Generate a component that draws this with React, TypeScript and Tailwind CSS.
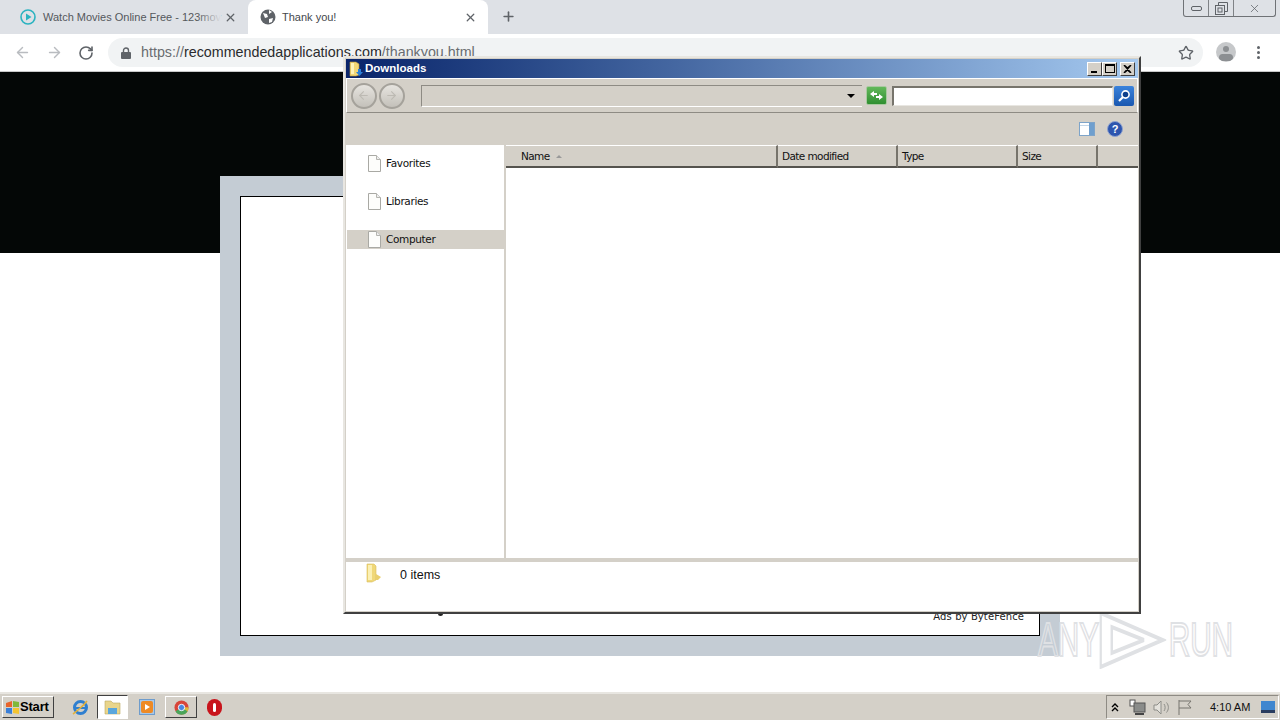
import React from 'react';
import { ArrowLeft, ArrowRight, RotateCw, Star, X, Plus } from 'lucide-react';

const SANS = '[font-family:"Liberation_Sans",Arial,sans-serif]';
const TAHOMA = '[font-family:"DejaVu_Sans",Verdana,sans-serif]';

const PageIcon = () => (
  <svg width="13" height="17" viewBox="0 0 13 17" className="shrink-0">
    <path d="M.5.5h8l4 4v12H.5z" fill="#fdfdfb" stroke="#a9a9a4" />
    <path d="M8.500.5v4h4" fill="#eee" stroke="#b5b5b0" />
  </svg>
);

const NavItem = ({ label, selected, mt }: { label: string; selected?: boolean; mt: string }) => (
  <div className={`${mt} h-[19px] flex items-center pl-[21px] gap-[5px] ${selected ? 'bg-[#d4d0c8]' : ''}`}>
    <PageIcon />
    <span className="text-[10.5px] text-[#111] tracking-[-0.35px]">{label}</span>
  </div>
);

const ColumnHead = ({ label, width, sort }: { label: string; width: string; sort?: boolean }) => (
  <div className={`${width} h-[23px] pt-[2px] bg-[#d4d0c8] border-t border-t-white border-r-2 border-r-[#77746c] border-b-2 border-b-[#55534e] flex items-center text-[10.5px] text-[#111] tracking-[-0.6px] ${sort ? 'pl-[15px]' : 'pl-[4px]'}`}>
    {label}
    {sort && <span className="ml-[6px] mb-[2px] w-0 h-0 border-x-[3px] border-x-transparent border-b-[3px] border-b-[#999]" />}
  </div>
);

const RoundNav = ({ dir }: { dir: 'l' | 'r' }) => (
  <div className="w-[26px] h-[26px] rounded-full border-2 border-[#a5a29b] bg-gradient-to-b from-[#e6e4df] to-[#c4c1ba] flex items-center justify-center">
    {dir === 'l' ? <ArrowLeft size={13} color="#bdbab3" /> : <ArrowRight size={13} color="#bdbab3" />}
  </div>
);

const CaptionBtn = ({ children }: { children: React.ReactNode }) => (
  <div className="w-[15px] h-[14px] bg-[#d4d0c8] border border-t-white border-l-white border-r-[#404040] border-b-[#404040] flex items-center justify-center">
    {children}
  </div>
);

const DownloadsWindow = () => (
  <div className={`absolute left-[343px] top-[56px] w-[798px] h-[558px] bg-[#d4d0c8] border-t-2 border-t-[#e8e6e1] border-l-2 border-l-[#e8e6e1] border-r-2 border-r-[#404040] border-b-2 border-b-[#404040] flex flex-col p-[1px] ${TAHOMA}`}>
    <div className="h-[19px] bg-gradient-to-r from-[#0a246a] to-[#a6caf0] flex items-center pl-[3px] pr-[3px] shrink-0">
      <svg width="14" height="16" viewBox="0 0 14 16" className="shrink-0">
        <path d="M1 1h6l3 2v11l-3 1H1z" fill="#f2d775" stroke="#b8963a" strokeWidth=".6" />
        <path d="M2 2h3v11H2z" fill="#fdf3b8" />
        <path d="M9 8h3v3h2l-3.500 4L7 11h2z" fill="#2a7fd8" />
      </svg>
      <span className="ml-[2px] text-[11.5px] font-bold text-white [font-family:'Liberation_Sans',Arial,sans-serif]">Downloads</span>
      <div className="ml-auto flex">
        <CaptionBtn><span className="w-[6px] h-[2px] bg-black mt-[6px] -ml-[2px]" /></CaptionBtn>
        <CaptionBtn><span className="w-[10px] h-[9px] border border-black border-t-2" /></CaptionBtn>
        <div className="ml-[3px]">
          <CaptionBtn>
            <svg width="9" height="8" viewBox="0 0 9 8"><path d="M1 0l3.500 3L8 0M1 8l3.500-3L8 8M1 0l7 8M8 0L1 8" stroke="#000" strokeWidth="1.4" fill="none" /></svg>
          </CaptionBtn>
        </div>
      </div>
    </div>

    <div className="h-[35px] shrink-0 border border-t-white border-l-white border-r-white border-b-[#8e8b84] flex items-center pl-[4px] pr-[3px] bg-[#d4d0c8]">
      <RoundNav dir="l" />
      <div className="ml-[2px]"><RoundNav dir="r" /></div>
      <div className="ml-[16px] w-[442px] h-[22px] bg-[#d4d0c8] border-l border-t border-[#8e8b84] border-b-white border-b flex items-center justify-end pr-[7px]">
        <span className="w-0 h-0 border-x-[4px] border-x-transparent border-t-[4px] border-t-black" />
      </div>
      <div className="ml-[4px] w-[21px] h-[19px] rounded-[2px] bg-gradient-to-b from-[#62b85a] to-[#2f8f31] border border-[#a9c9a0] flex items-center justify-center">
        <svg width="15" height="11" viewBox="0 0 15 11"><path d="M5 1L1 4l4 3V5h3V3H5zM10 10l4-3-4-3v2H7v2h3z" fill="#fff" /></svg>
      </div>
      <div className="ml-[5px] w-[222px] h-[20px] bg-white border-l-2 border-t-2 border-[#77746c] border-r border-b border-r-[#e8e6e1] border-b-[#e8e6e1]" />
      <div className="ml-[1px] w-[20px] h-[20px] rounded-[2px] bg-gradient-to-b from-[#3b83dc] to-[#1a58b0] flex items-center justify-center">
        <svg width="14" height="14" viewBox="0 0 14 14"><circle cx="8.500" cy="5.500" r="3.600" fill="#0c3f8c" stroke="#fff" strokeWidth="1.600" /><path d="M6 8l-4 4" stroke="#fff" strokeWidth="2.200" /></svg>
      </div>
    </div>

    <div className="h-[32px] shrink-0 flex items-center justify-end pr-[15px] gap-[12px]">
      <svg width="16" height="14" viewBox="0 0 16 14">
        <rect x=".5" y=".5" width="15" height="13" fill="#fff" stroke="#7ea4c9" />
        <rect x="10" y="1" width="5" height="12" fill="#6f9fce" />
        <path d="M1 3.500h9" stroke="#c3d6e8" />
      </svg>
      <svg width="16" height="16" viewBox="0 0 16 16">
        <circle cx="8" cy="8" r="7.500" fill="#2d55ae" stroke="#8ea2cf" />
        <text x="8" y="12" textAnchor="middle" fontSize="11" fontWeight="700" fill="#fff" fontFamily="Liberation Sans">?</text>
      </svg>
    </div>

    <div className="flex-1 flex min-h-0">
      <div className="w-[158px] shrink-0 bg-white pl-[1px] pt-[9px]">
        <NavItem label="Favorites" mt="" />
        <NavItem label="Libraries" mt="mt-[19px]" />
        <NavItem label="Computer" selected mt="mt-[19px]" />
      </div>
      <div className="ml-[2px] flex-1 bg-white flex flex-col min-w-0">
        <div className="flex shrink-0">
          <ColumnHead label="Name" width="w-[272px]" sort />
          <ColumnHead label="Date modified" width="w-[120px]" />
          <ColumnHead label="Type" width="w-[120px]" />
          <ColumnHead label="Size" width="w-[80px]" />
          <div className="flex-1 h-[23px] bg-[#d4d0c8] border-t border-t-white border-b-2 border-b-[#55534e]" />
        </div>
      </div>
    </div>

    <div className="h-[4px] shrink-0" />
    <div className="h-[49px] shrink-0 bg-white flex items-start pl-[19px] pt-[1px]">
      <svg width="18" height="20" viewBox="0 0 18 20" className="shrink-0">
        <path d="M2 1h7l2 2v14l-4 2H2z" fill="#f0d878" stroke="#d9bd5c" strokeWidth=".6" />
        <path d="M3 2h4v15H3z" fill="#fbf0b4" />
        <path d="M11 11l5 3-3 3h-2z" fill="#e9cf6d" />
      </svg>
      <span className={`ml-[17px] mt-[3px] text-[12.5px] text-[#111] ${SANS}`}>0 items</span>
    </div>
  </div>
);

const App = () => (
  <div className={`relative w-[1280px] h-[720px] overflow-hidden bg-white flex flex-col ${SANS}`}>
    <div className="h-[34px] bg-[#dee1e6] flex items-end shrink-0 relative">
      <div className="w-[248px] h-[34px] flex items-center pl-[20px] pr-[11px] shrink-0">
        <svg width="16" height="16" viewBox="0 0 16 16" className="shrink-0">
          <circle cx="8" cy="8" r="7" fill="none" stroke="#2bb3c0" strokeWidth="1.6" />
          <path d="M6 4.500l5.500 3.500L6 11.500z" fill="#2bb3c0" />
        </svg>
        <span className="relative ml-[7px] text-[11px] text-[#55585c] whitespace-nowrap">
          Watch Movies Online Free - 123mov
          <span className="absolute right-0 top-0 bottom-0 w-[24px] bg-gradient-to-r from-transparent to-[#dee1e6]" />
        </span>
        <X size={13} strokeWidth={2.4} color="#5f6368" className="ml-auto" />
      </div>
      <div className="w-[240px] h-[34px] bg-white rounded-t-[8px] flex items-center pl-[12px] pr-[11px] shrink-0">
        <svg width="16" height="16" viewBox="0 0 16 16" className="shrink-0">
          <circle cx="8" cy="8" r="7.500" fill="#5f6368" />
          <path d="M3 4l4 1 1 3-3 1zM9 10l4-1-1 4-3 1zM9 1l3 2-3 2z" fill="#fff" />
        </svg>
        <span className="ml-[6px] text-[11px] text-[#45484c]">Thank you!</span>
        <X size={13} strokeWidth={2.4} color="#5f6368" className="ml-auto" />
      </div>
      <Plus size={15} strokeWidth={2.6} color="#5f6368" className="ml-[13px] mb-[10px]" />
      <div className="ml-auto mr-[4px] mb-[17px] w-[93px] h-[17px] border border-[#6f7276] border-t-0 rounded-b-[3px] flex items-center">
        <div className="w-[25px] h-full border-r border-[#7f8286] flex items-center justify-center">
          <span className="w-[11px] h-[5px] rounded-[2px] border border-[#5f6368]" />
        </div>
        <div className="w-[25px] h-full border-r border-[#7f8286] flex items-center justify-center">
          <svg width="13" height="13" viewBox="0 0 13 13" fill="none" stroke="#5f6368"><rect x=".5" y="3.500" width="9" height="9" /><path d="M3.500 3.500v-3h9v9h-3" /><rect x="3" y="6" width="4" height="4" /></svg>
        </div>
        <div className="flex-1 flex items-center justify-center">
          <X size={13} strokeWidth={1.4} color="#5f6368" />
        </div>
      </div>
    </div>

    <div className="h-[38px] shrink-0 bg-white border-b border-[#c8c8c8] flex items-center pl-[14px]">
      <ArrowLeft size={17} strokeWidth={2} color="#b9bcc0" />
      <ArrowRight size={17} strokeWidth={2} color="#b9bcc0" className="ml-[15px]" />
      <RotateCw size={16} strokeWidth={2.4} color="#5f6368" className="ml-[15px]" />
      <div className="ml-[14px] w-[1095px] h-[29px] bg-[#f1f3f4] rounded-full flex items-center pl-[13px] pr-[8px]">
        <svg width="10" height="12" viewBox="0 0 10 12" className="shrink-0">
          <rect y="5" width="10" height="7" rx="1" fill="#5f6368" />
          <path d="M2.500 5V3.500a2.500 2.500 0 0 1 5 0V5" fill="none" stroke="#5f6368" strokeWidth="1.4" />
        </svg>
        <span className="ml-[10px] text-[14.3px] text-[#6a6d70] whitespace-nowrap">
          https://<span className="text-[#2a2b2d]">recommendedapplications.com</span>/thankyou.html
        </span>
        <Star size={16} strokeWidth={2} color="#5f6368" className="ml-auto mr-[1px]" />
      </div>
      <div className="ml-[13px] mb-[1px] w-[20px] h-[20px] rounded-full bg-[#c6c8ca] relative overflow-hidden shrink-0">
        <span className="absolute left-[7px] top-[4px] w-[6px] h-[6px] rounded-full bg-[#8c8f92]" />
        <span className="absolute left-[3px] top-[12px] w-[14px] h-[7px] rounded-full bg-[#8c8f92]" />
      </div>
      <div className="ml-[21px] flex flex-col gap-[2px]">
        <span className="w-[3px] h-[3px] rounded-full bg-[#5f6368]" />
        <span className="w-[3px] h-[3px] rounded-full bg-[#5f6368]" />
        <span className="w-[3px] h-[3px] rounded-full bg-[#5f6368]" />
      </div>
    </div>

    <div className="flex-1 min-h-0 bg-white">
      <div className="h-[181px] bg-[#040706]" />
      <div className="-mt-[77px] ml-[220px] w-[840px] h-[480px] bg-[#c4ccd4] p-[20px]">
        <div className="relative h-[440px] bg-white border border-black flex flex-col justify-end items-end pr-[15px] pb-[11px]">
          <span className="text-[10px] text-[#222] tracking-[0.1px] [font-family:'DejaVu_Sans',sans-serif]">Ads by ByteFence</span>
          <span className="absolute left-[197px] bottom-[19px] w-[5px] h-[3px] rounded-b-full bg-[#222]" />
        </div>
      </div>
    </div>

    <div className="absolute left-[1038px] top-[611px] flex items-center text-[48px] leading-none text-transparent [font-family:'Liberation_Sans',sans-serif] scale-x-[0.62] origin-left [-webkit-text-stroke:2px_#dfe1e4]">
      <span>ANY</span>
      <svg width="108" height="58" viewBox="0 0 108 58" fill="none" stroke="#dfe1e4" strokeWidth="4"><path d="M2 2v54l100-27zM20 16v26l52-13z" /></svg>
      <span className="ml-[4px]">RUN</span>
    </div>

    <DownloadsWindow />

    <div className="h-[28px] shrink-0 bg-[#d4d0c8] border-t-2 border-t-[#e8e6e1] flex items-center pl-[2px] relative">
      <div className="w-[52px] h-[22px] border border-t-white border-l-white border-r-[#404040] border-b-[#404040] flex items-center pl-[2px]">
        <svg width="15" height="15" viewBox="0 0 15 15" className="shrink-0">
          <path d="M1 3l6-2v6H1z" fill="#e8642c" />
          <path d="M8 1l6 1v5H8z" fill="#7fb83a" />
          <path d="M1 8h6v6l-6-1z" fill="#3a7fd8" />
          <path d="M8 8h6v6l-6-1z" fill="#f4c430" />
        </svg>
        <span className="text-[13px] font-bold text-black tracking-[-0.2px]">Start</span>
      </div>
      <svg width="17" height="17" viewBox="0 0 17 17" className="ml-[18px] shrink-0">
        <circle cx="8.500" cy="8.500" r="6" fill="none" stroke="#2f7fd0" strokeWidth="3" />
        <path d="M3 9h11" stroke="#2f7fd0" strokeWidth="2" />
        <path d="M1 15C4 13 12 6 15 2" stroke="#e3b23c" strokeWidth="1.6" fill="none" />
      </svg>
      <div className="ml-[8px] w-[31px] h-[24px] bg-white border border-t-[#404040] border-l-[#404040] border-r-white border-b-white flex items-center justify-center">
        <svg width="17" height="15" viewBox="0 0 17 15">
          <path d="M1 1h6l2 2h7v11H1z" fill="#e9d58b" stroke="#bca75f" strokeWidth=".6" />
          <path d="M4 8h9v6H4z" fill="#5aa6dc" />
        </svg>
      </div>
      <div className="ml-[11px] w-[16px] h-[16px] bg-[#a8c8e8] border border-[#6e9ccc] flex items-center justify-center">
        <span className="w-[12px] h-[12px] rounded-[2px] bg-[#ee8a25] flex items-center justify-center">
          <span className="w-0 h-0 border-y-[3px] border-y-transparent border-l-[5px] border-l-white" />
        </span>
      </div>
      <div className="ml-[10px] w-[32px] h-[22px] border border-t-white border-l-white border-r-[#404040] border-b-[#404040] flex items-center justify-center">
        <svg width="15" height="15" viewBox="0 0 16 16">
          <circle cx="8" cy="8" r="7.500" fill="#d8453a" />
          <path d="M8 8L1.500 12A7.500 7.500 0 0 1 4 1.600z" fill="#e0b93a" transform="rotate(210 8 8)" />
          <path d="M8 8L1.500 12A7.500 7.500 0 0 0 14.500 12z" fill="#4aa55a" />
          <circle cx="8" cy="8" r="3.400" fill="#4a86e0" stroke="#fff" />
        </svg>
      </div>
      <div className="ml-[10px] w-[15px] h-[17px] rounded-full bg-[#c8141c] flex items-center justify-center">
        <span className="w-[3px] h-[9px] rounded-full bg-white" />
      </div>

      <div className="ml-auto mr-[1px] h-[24px] w-[173px] border border-t-[#8e8b84] border-l-[#8e8b84] border-r-white border-b-white flex items-center pl-[4px] relative">
        <svg width="8" height="9" viewBox="0 0 8 9" fill="none" stroke="#000" strokeWidth="1.4" className="shrink-0"><path d="M1 4l3-3 3 3M1 8l3-3 3 3" /></svg>
        <svg width="17" height="17" viewBox="0 0 17 17" className="ml-[10px] shrink-0">
          <rect x="1" y="1" width="5" height="6" fill="#fff" stroke="#555" />
          <rect x="5" y="4" width="11" height="9" fill="#8a8c8a" stroke="#555" />
          <path d="M6 15h9" stroke="#444" strokeWidth="2" />
        </svg>
        <svg width="17" height="15" viewBox="0 0 17 15" className="ml-[7px] shrink-0" fill="none" stroke="#8d8d88">
          <path d="M1 5h3l4-4v13l-4-4H1z" fill="#e4e2dc" />
          <path d="M11 4c1.500 2 1.500 5 0 7M13.500 2.500c2.500 3 2.500 7 0 10" />
        </svg>
        <svg width="16" height="16" viewBox="0 0 16 16" className="ml-[7px] shrink-0" fill="none" stroke="#77756f">
          <path d="M2 1v15M2 2h12l-3 3.500 3 3.500H2" />
        </svg>
        <span className="ml-[17px] text-[11px] text-[#111] whitespace-nowrap">4:10 AM</span>
        <svg width="14" height="12" viewBox="0 0 14 12" className="ml-auto mr-[3px] shrink-0">
          <rect width="14" height="12" fill="#3f86cf" />
          <rect y="9" width="14" height="3" fill="#2a3d5f" />
        </svg>
      </div>
    </div>
  </div>
);

export default App;
